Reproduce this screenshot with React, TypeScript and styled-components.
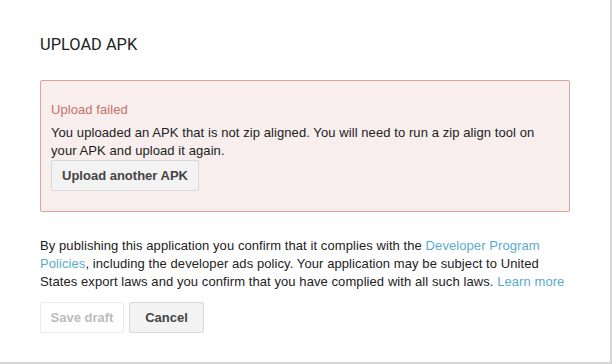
import React from 'react';
import styled, {createGlobalStyle} from 'styled-components';

const GlobalStyle = createGlobalStyle`
    html, body {
        margin: 0;
        padding: 0;
        background: #ffffff;
    }
    body {
        font-family: 'Liberation Sans', Arial, sans-serif;
        font-size: 13px;
        letter-spacing: 0.08px;
        color: #222222;
    }
`;

const Dialog = styled.div`
    box-sizing: border-box;
    width: 612px;
    height: 364px;
    background: #ffffff;
    border-right: 2px solid #d6d6d6;
    border-bottom: 2px solid #d6d6d6;
    padding: 36px 0 0 40px;
`;

const Title = styled.h1`
    margin: 0 0 26px;
    font-family: Roboto, 'Liberation Sans', sans-serif;
    font-weight: 400;
    font-size: 16.4px;
    letter-spacing: 0;
    line-height: 18px;
    color: #222222;
`;

const ErrorBox = styled.div`
    box-sizing: border-box;
    width: 530px;
    height: 132px;
    padding: 20px 10px 0;
    background: #f7eeed;
    border: 1px solid #dea39b;
    border-radius: 2px;
`;

const ErrorTitle = styled.div`
    color: #c8706b;
    line-height: 18px;
    margin-bottom: 5px;
`;

const Message = styled.p`
    margin: 0;
    line-height: 18px;
    width: 500px;
`;

const Button = styled.button<{$width: number; $muted?: boolean}>`
    box-sizing: border-box;
    width: ${(props) => props.$width}px;
    height: 31px;
    padding: 0;
    white-space: nowrap;
    font-family: 'Liberation Sans', Arial, sans-serif;
    font-size: 13px;
    font-weight: bold;
    letter-spacing: 0;
    color: ${(props) => (props.$muted ? '#bcbcbc' : '#444444')};
    background: ${(props) => (props.$muted ? '#ffffff' : '#f3f3f3')};
    border: 1px solid ${(props) => (props.$muted ? '#ebebeb' : '#d9d9d9')};
    border-radius: 2px;
`;

const RetryButton = styled(Button)`
    display: block;
`;

const Legal = styled.p`
    margin: 25px 0 0;
    width: 530px;
    line-height: 18px;
`;

const Link = styled.a`
    color: #5aacca;
    text-decoration: none;
`;

const Actions = styled.div`
    display: flex;
    gap: 5px;
    margin-top: 11px;
`;

export default function App() {
    return (
        <>
            <GlobalStyle />
            <Dialog>
                <Title>UPLOAD APK</Title>
                <ErrorBox>
                    <ErrorTitle>Upload failed</ErrorTitle>
                    <Message>
                        You uploaded an APK that is not zip aligned. You will need to run a zip align tool on
                        your APK and upload it again.
                    </Message>
                    <RetryButton $width={148}>Upload another APK</RetryButton>
                </ErrorBox>
                <Legal>
                    By publishing this application you confirm that it complies with the{' '}
                    <Link href="#">Developer Program Policies</Link>, including the developer ads policy. Your
                    application may be subject to United States export laws and you confirm that you have
                    complied with all such laws. <Link href="#">Learn more</Link>
                </Legal>
                <Actions>
                    <Button $width={84} $muted disabled>
                        Save draft
                    </Button>
                    <Button $width={75}>Cancel</Button>
                </Actions>
            </Dialog>
        </>
    );
}
